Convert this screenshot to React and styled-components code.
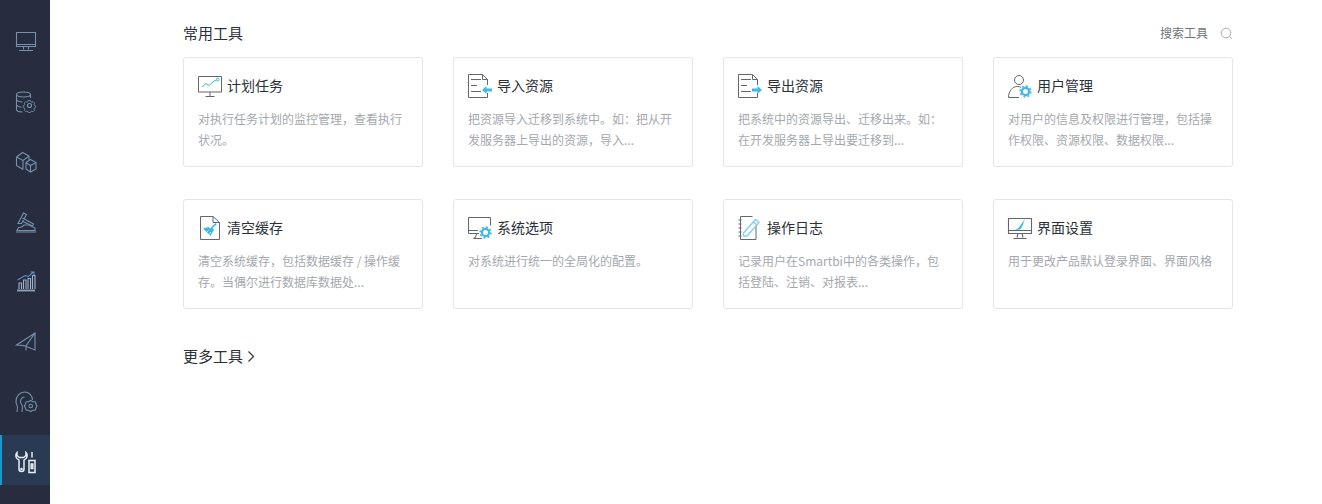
import React from 'react';
import styled, { createGlobalStyle } from 'styled-components';

const GlobalStyle = createGlobalStyle`
	html, body {
		margin: 0;
		padding: 0;
		background: #fff;
		font-family: "Noto Sans CJK SC", "Liberation Sans", sans-serif;
	}
`;

const Page = styled.div`
	display: flex;
	width: 1322px;
	height: 504px;
	overflow: hidden;
`;
const Sidebar = styled.nav`
	display: flex;
	flex-direction: column;
	flex: none;
	gap: 10px;
	width: 50px;
	padding-top: 15px;
	box-sizing: border-box;
	background: #272d3f;
`;
const NavItem = styled.div`
	display: flex;
	align-items: center;
	justify-content: center;
	flex: none;
	height: 50px;
	box-sizing: border-box;
	padding-top: 4px;
	border-left: 2px solid ${p => (p.$active ? '#1a9ad0' : 'transparent')};
	background: ${p => (p.$active ? '#2a3a52' : 'transparent')};
`;
const Main = styled.main`
	flex: none;
	width: 1050px;
	margin-left: 133px;
`;
const Header = styled.div`
	display: flex;
	align-items: center;
	justify-content: space-between;
	height: 57px;
	padding-top: 9px;
	box-sizing: border-box;
`;
const SectionTitle = styled.h2`
	margin: 0;
	font-size: 15px;
	font-weight: 400;
	line-height: 20px;
	color: #2b2f38;
`;
const Search = styled.div`
	display: flex;
	align-items: center;
	gap: 12px;
	font-size: 12px;
	line-height: 20px;
	color: #70747c;
`;
const Grid = styled.div`
	display: grid;
	grid-template-columns: repeat(4, 240px);
	grid-auto-rows: 110px;
	column-gap: 30px;
	row-gap: 32px;
`;
const Card = styled.article`
	padding: 14px 14px;
	box-sizing: border-box;
	border: 1px solid #e3e5ea;
	border-radius: 3px;
	background: #fff;
`;
const CardHead = styled.div`
	display: flex;
	align-items: center;
	gap: 5px;
	height: 26px;
	margin-bottom: 10px;
`;
const IconBox = styled.svg`
	display: block;
	flex: none;
	width: 24px;
	height: 24px;
	margin-top: 2px;
	fill: none;
	overflow: visible;
`;
const CardTitle = styled.h3`
	margin: 0;
	font-size: 14px;
	font-weight: 400;
	line-height: 20px;
	color: #2b2f38;
`;
const CardText = styled.p`
	margin: 0;
	font-size: 12px;
	line-height: 21px;
	color: #a4a8ae;
`;
const More = styled.div`
	display: flex;
	align-items: center;
	gap: 4px;
	margin-top: 37px;
`;
const NavIcon = styled.svg`
	display: block;
	width: 22px;
	height: 22px;
	fill: none;
	overflow: visible;
	stroke: ${p => (p.$active ? '#e8eef3' : '#7391ad')};
	stroke-width: ${p => (p.$active ? 1.5 : 1.1)};
`;

const G = '#63666b';
const B = '#3db8e8';

const Gear = ({ x, y }) => (
	<g stroke={B} fill="none">
		<circle cx={x} cy={y} r="3.600" strokeWidth="2.200" />
		<circle cx={x} cy={y} r="5.400" strokeWidth="1.500" strokeDasharray="2 2.200" />
	</g>
);

const icons = {
	plan: (
		<>
			<path d="M.5 2.500h23v15.500H.5zM12 18v4M7.500 22.500h9" stroke={G} />
			<path d="M4 13l4-3.500 3 2 5-4.500 2.500-1" stroke={B} />
			<circle cx="19.800" cy="5.500" r="1.300" stroke={B} />
		</>
	),
	importRes: (
		<>
			<path d="M14.500.5H.5v23h19V19M14.500.5l5 5V11M14.500.5v5h5M3 5.500h10M3 11.500h6M3 17.500h10" stroke={G} />
			<path d="M14 16l4.500-4v2.500H24v3h-5.500V20z" fill={B} />
		</>
	),
	exportRes: (
		<>
			<path d="M14.500.5H.5v23h19V19M14.500.5l5 5V11M14.500.5v5h5M3 5.500h10M3 11.500h6M3 17.500h10" stroke={G} />
			<path d="M24 16l-4.500-4v2.500H14v3h5.500V20z" fill={B} />
		</>
	),
	user: (
		<>
			<circle cx="11" cy="6" r="4.500" stroke={G} />
			<path d="M.5 23.500c0-6 3.500-11 9-11 1.500 0 2.500.3 3.500.8M.5 23.500H11" stroke={G} />
			<Gear x={17.500} y={17.500} />
		</>
	),
	clear: (
		<>
			<path d="M15 .5H2.500v23h19V6.500zM15 .5v6h6.500" stroke={G} />
			<path d="M17.500 7l1.200 1.500-4.200 3.500 1.500 2-3.500 6-7.500-7.500 5.500-1.500 1.500 1.500z" fill={B} />
			<path d="M8.500 16.500l2-2M11 18.500l2-2.500" stroke="#fff" strokeWidth=".8" />
		</>
	),
	system: (
		<>
			<path d="M11 17.500H.5V1.500h22v8M.5 14.500H10M9 17.500l-2 4.500H5.500M5.500 22.500H14" stroke={G} />
			<Gear x={17.500} y={16.500} />
		</>
	),
	log: (
		<>
			<path d="M18 10v13.500H2.500V.5h12M.5 4h3M.5 8h3M.5 12h3M.5 16h3M.5 20h3" stroke={G} />
			<path d="M5.500 17l12-13.500 3.500 3L9 20H5.500zM15.500 6l3.500 3" stroke="#7fd0f0" strokeWidth="1.300" />
		</>
	),
	skin: (
		<>
			<path d="M.5 2.500h23v15H.5zM.5 14.500h23M10 17.500l-1 4M14 17.500l1 4M5.500 22.500h13" stroke={G} strokeWidth="1.100" />
			<path d="M17 3l-5 7-1.500 2-3.500 2 5-.5 2-2.500z" fill={B} />
		</>
	),
};

const navIcons = [
	<path key="a" d="M1.500 1.500h19v14h-19zM1.500 13.500h19M8.500 15.500v3M13.500 15.500v3M4 19.500h14" />,
	<g key="b">
		<ellipse cx="8.500" cy="3.500" rx="7" ry="2.500" />
		<path d="M1.500 3.500v15c0 1.500 3 2.500 6 2.500M15.500 3.500V7M1.500 8.500c1 1.800 3.500 2.500 6 2.500M1.500 14c1 1.500 3 2.200 5 2.200" />
		<circle cx="14.500" cy="14.500" r="2" />
		<path d="M13 8h3l.4 1.700 1.500.6 1.500-.9 2 2-.9 1.500.6 1.500 1.600.4v2.800l-1.600.4-.6 1.500.9 1.500-2 2-1.500-.9-1.500.6-.4 1.300h-3l-.4-1.300-1.500-.6-1.500.9-2-2 .9-1.500-.6-1.500-1.600-.4v-2.800l1.600-.4.6-1.500-.9-1.500 2-2 1.500.9 1.500-.6z" transform="translate(3.500 3.500) scale(.75)" />
	</g>,
	<g key="c">
		<path d="M1.500 6l6-4.500L14 5v4M1.500 6v8.500l6.500 4M1.500 6L8 9.500v9M8 9.500L14 5" />
		<path d="M15.500 8.500l5.500 3v6.500l-5.500 3-4.500-3v-6.500zM11 11.500l4.500 3 5.500-3M15.500 14.500v6.500" />
	</g>,
	<g key="d">
		<path d="M2 19.500h18v-2.500l-6-3H9c-1 1.500-3 2.500-5.500 2.500zM1 21h20" />
		<path d="M3 12.500L8.500 2l3 1.500-5 9zM7.500 7l11 6-1 2L8 10.500" />
	</g>,
	<g key="e">
		<path d="M2 19.500h18" strokeWidth="1.800" stroke="#8ea3ba" />
		<path d="M4 18v-6h2.500v6M8.500 18V9H11v9M13 18V7.500h2.500V18M17.500 18V4.500H20V18" stroke="#9db3c9" />
		<path d="M2.500 9L10 4.500l3.500 1L18.500 1M15.500 1H19v3" stroke="#5f8fc0" />
	</g>,
	<g key="f">
		<path d="M1.500 14L20 2v17L9 14.500zM1.500 14L11 15M20 2L11 15v4.500" />
	</g>,
	<g key="g">
		<path d="M2 21l.5-4.500c0-2-1.500-3-1.500-6C1 5 5 1 9.500 1s8 3.500 8 8M7 21l.5-5c0-2-2-3-2-5.500C5.500 8 7.500 6 9.500 6" />
		<circle cx="15.700" cy="15" r="1.800" />
		<path d="M15.700 9.500l2.200 1.300h2.300l.8 2.300 1 1.900-1 1.900-.8 2.300h-2.300l-2.200 1.300-2.200-1.300h-2.300l-.8-2.300-1-1.900 1-1.900.8-2.300h2.300z" />
	</g>,
	<g key="h">
		<path d="M2 1.500C.5 3 .5 6 2 7.500L4 9v9a2.500 2.500 0 0 0 5 0V9l2-1.500c1.500-1.500 1.500-4.500 0-6v3L8.500 6.500h-4L2 4.500z" />
		<circle cx="6.500" cy="18" r=".6" />
		<path d="M17 1v5.500M14 9.500h6v12h-6zM16.200 13v4.500h1.600V13z" />
	</g>,
];

const tools = [
	{ key: 'plan', title: '计划任务', text: '对执行任务计划的监控管理，查看执行状况。' },
	{ key: 'importRes', title: '导入资源', text: '把资源导入迁移到系统中。如：把从开发服务器上导出的资源，导入...' },
	{ key: 'exportRes', title: '导出资源', text: '把系统中的资源导出、迁移出来。如：在开发服务器上导出要迁移到...' },
	{ key: 'user', title: '用户管理', text: '对用户的信息及权限进行管理，包括操作权限、资源权限、数据权限...' },
	{ key: 'clear', title: '清空缓存', text: '清空系统缓存，包括数据缓存 / 操作缓存。当偶尔进行数据库数据处...' },
	{ key: 'system', title: '系统选项', text: '对系统进行统一的全局化的配置。' },
	{ key: 'log', title: '操作日志', text: '记录用户在Smartbi中的各类操作，包括登陆、注销、对报表...' },
	{ key: 'skin', title: '界面设置', text: '用于更改产品默认登录界面、界面风格' },
];

const App = () => (
	<Page>
		<GlobalStyle />
		<Sidebar>
			{navIcons.map((icon, i) => (
				<NavItem key={i} $active={i === 7}>
					<NavIcon viewBox="0 0 22 22" $active={i === 7}>
						{icon}
					</NavIcon>
				</NavItem>
			))}
		</Sidebar>
		<Main>
			<Header>
				<SectionTitle>常用工具</SectionTitle>
				<Search>
					搜索工具
					<svg width="13" height="13" viewBox="0 0 13 13" fill="none" stroke="#a9adb3">
						<circle cx="6" cy="6" r="4.800" />
						<path d="M9.500 9.500l2.500 2.500" />
					</svg>
				</Search>
			</Header>
			<Grid>
				{tools.map(tool => (
					<Card key={tool.key}>
						<CardHead>
							<IconBox viewBox="0 0 24 24">{icons[tool.key]}</IconBox>
							<CardTitle>{tool.title}</CardTitle>
						</CardHead>
						<CardText>{tool.text}</CardText>
					</Card>
				))}
			</Grid>
			<More>
				<SectionTitle>更多工具</SectionTitle>
				<svg width="9" height="13" viewBox="0 0 9 13" fill="none" stroke="#3a3e47" strokeWidth="1.300">
					<path d="M1.500 1.500l5 5-5 5" />
				</svg>
			</More>
		</Main>
	</Page>
);

export default App;
